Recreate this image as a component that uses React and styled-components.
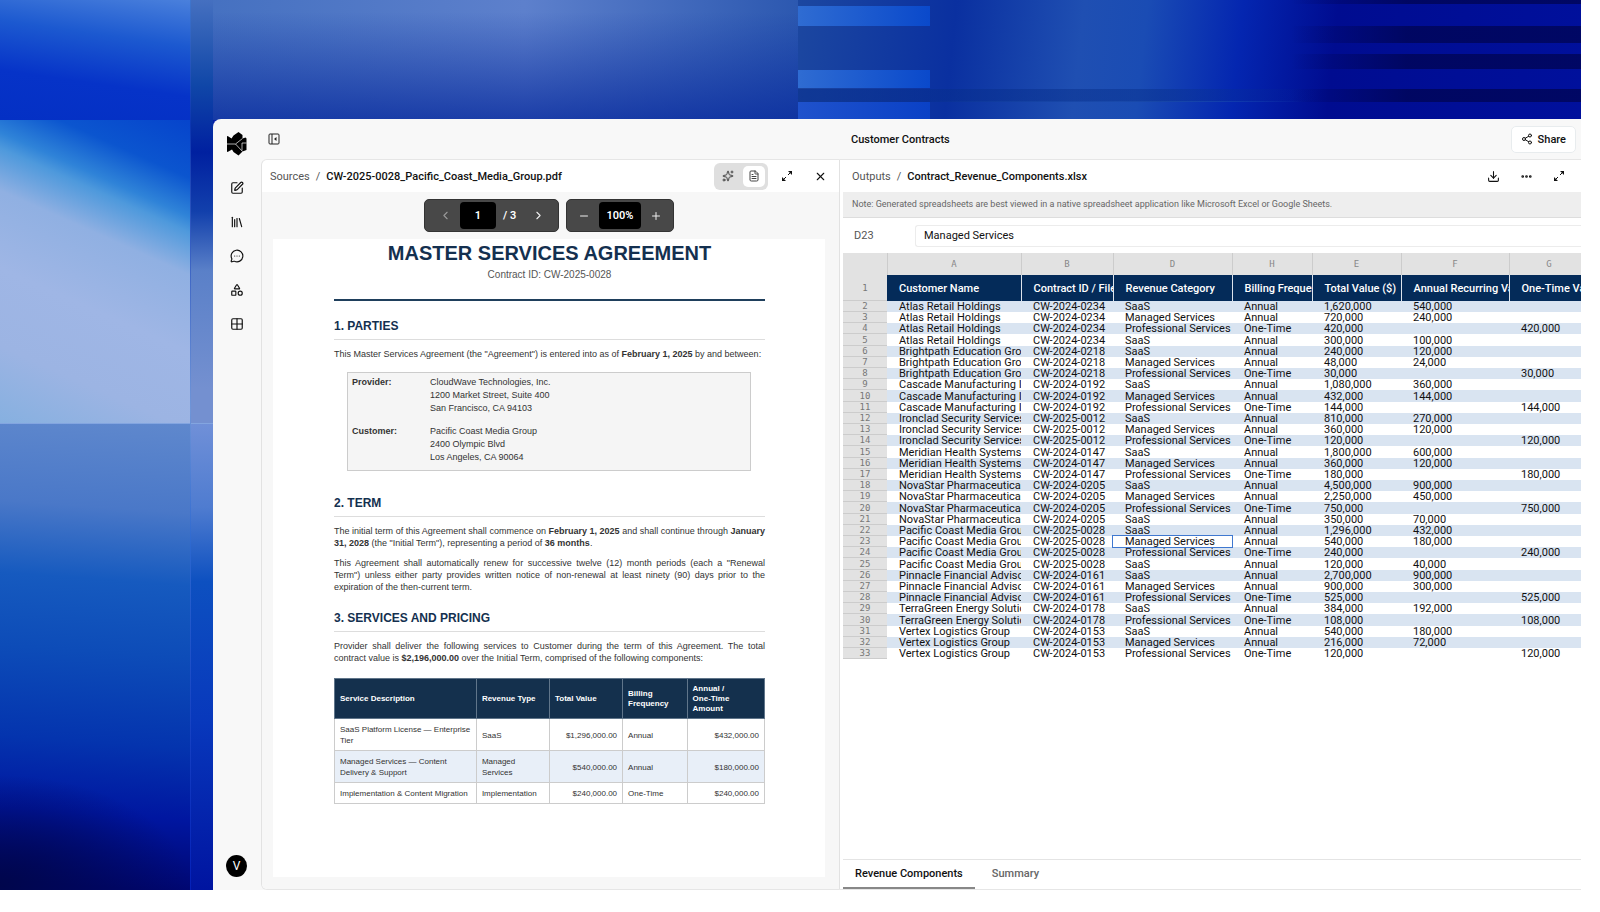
import styled, { createGlobalStyle, css } from "styled-components";
import {
  Download,
  Ellipsis,
  FileText,
  Grid2x2,
  Library,
  MessageCircleMore,
  Minus,
  Plus,
  ChevronLeft,
  ChevronRight,
  Shapes,
  Share2,
  Sparkles,
  SquarePen,
  X,
} from "lucide-react";

const NAMES = {
  atlas: ["Atlas Retail Holdings", "CW-2024-0234"],
  bright: ["Brightpath Education Group", "CW-2024-0218"],
  cascade: ["Cascade Manufacturing Inc", "CW-2024-0192"],
  iron: ["Ironclad Security Services", "CW-2025-0012"],
  meridian: ["Meridian Health Systems", "CW-2024-0147"],
  nova: ["NovaStar Pharmaceuticals", "CW-2024-0205"],
  pacific: ["Pacific Coast Media Group", "CW-2025-0028"],
  pinnacle: ["Pinnacle Financial Advisors", "CW-2024-0161"],
  terra: ["TerraGreen Energy Solutions", "CW-2024-0178"],
  vertex: ["Vertex Logistics Group", "CW-2024-0153"],
};

const SAAS = "SaaS";
const MANAGED = "Managed Services";
const PRO = "Professional Services";

// customer, category, total value, yearly value (none = one-time)
const DEALS = [
  ["atlas", SAAS, "1,620,000", "540,000"],
  ["atlas", MANAGED, "720,000", "240,000"],
  ["atlas", PRO, "420,000"],
  ["atlas", SAAS, "300,000", "100,000"],
  ["bright", SAAS, "240,000", "120,000"],
  ["bright", MANAGED, "48,000", "24,000"],
  ["bright", PRO, "30,000"],
  ["cascade", SAAS, "1,080,000", "360,000"],
  ["cascade", MANAGED, "432,000", "144,000"],
  ["cascade", PRO, "144,000"],
  ["iron", SAAS, "810,000", "270,000"],
  ["iron", MANAGED, "360,000", "120,000"],
  ["iron", PRO, "120,000"],
  ["meridian", SAAS, "1,800,000", "600,000"],
  ["meridian", MANAGED, "360,000", "120,000"],
  ["meridian", PRO, "180,000"],
  ["nova", SAAS, "4,500,000", "900,000"],
  ["nova", MANAGED, "2,250,000", "450,000"],
  ["nova", PRO, "750,000"],
  ["nova", SAAS, "350,000", "70,000"],
  ["pacific", SAAS, "1,296,000", "432,000"],
  ["pacific", MANAGED, "540,000", "180,000"],
  ["pacific", PRO, "240,000"],
  ["pacific", SAAS, "120,000", "40,000"],
  ["pinnacle", SAAS, "2,700,000", "900,000"],
  ["pinnacle", MANAGED, "900,000", "300,000"],
  ["pinnacle", PRO, "525,000"],
  ["terra", SAAS, "384,000", "192,000"],
  ["terra", PRO, "108,000"],
  ["vertex", SAAS, "540,000", "180,000"],
  ["vertex", MANAGED, "216,000", "72,000"],
  ["vertex", PRO, "120,000"],
];

const COLUMNS = [
  ["A", "Customer Name", 134],
  ["B", "Contract ID / File", 92],
  ["D", "Revenue Category", 119],
  ["H", "Billing Frequency", 80],
  ["E", "Total Value ($)", 89],
  ["F", "Annual Recurring Value ($)", 108],
  ["G", "One-Time Value ($)", 80],
];

const SERVICES = [
  ["SaaS Platform License — Enterprise Tier", "SaaS", "$1,296,000.00", "Annual", "$432,000.00"],
  ["Managed Services — Content Delivery & Support", "Managed Services", "$540,000.00", "Annual", "$180,000.00"],
  ["Implementation & Content Migration", "Implementation", "$240,000.00", "One-Time", "$240,000.00"],
];

const Logo = () => (
  <svg width="20" height="24" viewBox="0 0 20 24" aria-hidden="true">
    <path
      d="M0 4 1.500 4.500 4.500 6.500 6.500 3.500 11.500 0l4 3v3.500L18.500 5.500l1 1V18l-4 1.500-4 4L6.500 20 5 17.500 1.500 19.500 0 20Z"
      fill="#000"
    />
    <path
      d="M0 12h8.500L15.500 6.500M8.500 12l7 7.500M15 11v7.500M15 11h4.500"
      stroke="#f8f8f8"
      strokeWidth="0.7"
      fill="none"
    />
  </svg>
);

const PanelIcon = () => (
  <svg width="12" height="12" viewBox="0 0 12 12" fill="none" stroke="#222" aria-hidden="true">
    <rect x="1" y="1" width="10" height="10" rx="1" />
    <path d="M4 1v10" />
    <path d="M8.500 4v4L6 6Z" fill="#222" stroke="none" />
  </svg>
);

const ExpandIcon = () => (
  <svg width="12" height="12" viewBox="0 0 12 12" fill="none" stroke="#111" aria-hidden="true">
    <path d="M7 5l3-3M5 7l-3 3" />
    <path d="M7 1h4v4ZM1 7v4h4Z" fill="#111" stroke="none" />
  </svg>
);

const App = () => (
  <>
    <GlobalStyle />
    <Desktop>
      <Window>
        <SideBar>
          <Logo />
          <Nav>
            <IconButton aria-label="New"><SquarePen size={14} strokeWidth={2} /></IconButton>
            <IconButton aria-label="Library"><Library size={14} strokeWidth={2} /></IconButton>
            <IconButton aria-label="Chats"><MessageCircleMore size={14} strokeWidth={2} /></IconButton>
            <IconButton aria-label="Components"><Shapes size={14} strokeWidth={2} /></IconButton>
            <IconButton aria-label="Tables"><Grid2x2 size={14} strokeWidth={2} /></IconButton>
          </Nav>
          <Avatar>V</Avatar>
        </SideBar>
        <Workspace>
          <TopBar>
            <TopLeft>
              <IconButton aria-label="Collapse panel"><PanelIcon /></IconButton>
            </TopLeft>
            <TopRight>
              <PageTitle>Customer Contracts</PageTitle>
              <ShareButton><Share2 size={12} />Share</ShareButton>
            </TopRight>
          </TopBar>
          <Panes>
            <SourcePane />
            <OutputPane />
          </Panes>
        </Workspace>
      </Window>
    </Desktop>
  </>
);

const SourcePane = () => (
  <Pane $framed>
    <PaneHeader>
      <Crumb>Sources</Crumb>
      <Crumb>/</Crumb>
      <FileName>CW-2025-0028_Pacific_Coast_Media_Group.pdf</FileName>
      <HeaderActions>
        <ViewSwitch>
          <ViewButton aria-label="Summary view"><Sparkles size={12} /></ViewButton>
          <ViewButton $active aria-label="Document view"><FileText size={12} /></ViewButton>
        </ViewSwitch>
        <IconButton aria-label="Expand"><ExpandIcon /></IconButton>
        <IconButton aria-label="Close"><X size={13} /></IconButton>
      </HeaderActions>
    </PaneHeader>
    <Viewer>
      <PdfControls>
        <PdfGroup $pad={5}>
          <PdfButton $dim aria-label="Previous page"><ChevronLeft size={13} /></PdfButton>
          <PdfInput $width={36} defaultValue="1" aria-label="Page" />
          <PdfText>/ 3</PdfText>
          <PdfButton aria-label="Next page"><ChevronRight size={13} /></PdfButton>
        </PdfGroup>
        <PdfGroup $pad={2}>
          <PdfButton aria-label="Zoom out"><Minus size={12} /></PdfButton>
          <PdfInput $width={42} defaultValue="100%" aria-label="Zoom" />
          <PdfButton aria-label="Zoom in"><Plus size={12} /></PdfButton>
        </PdfGroup>
      </PdfControls>
      <Paper>
        <DocTitle>MASTER SERVICES AGREEMENT</DocTitle>
        <DocId>Contract ID: CW-2025-0028</DocId>
        <DocHeading>1. PARTIES</DocHeading>
        <DocText>
          This Master Services Agreement (the "Agreement") is entered into as of <b>February 1, 2025</b> by and between:
        </DocText>
        <Parties>
          <dt>Provider:</dt>
          <dd>CloudWave Technologies, Inc.<br />1200 Market Street, Suite 400<br />San Francisco, CA 94103</dd>
          <dt>Customer:</dt>
          <dd>Pacific Coast Media Group<br />2400 Olympic Blvd<br />Los Angeles, CA 90064</dd>
        </Parties>
        <DocHeading>2. TERM</DocHeading>
        <DocText>
          The initial term of this Agreement shall commence on <b>February 1, 2025</b> and shall continue through{" "}
          <b>January 31, 2028</b> (the "Initial Term"), representing a period of <b>36 months</b>.
        </DocText>
        <DocText>
          This Agreement shall automatically renew for successive twelve (12) month periods (each a "Renewal Term")
          unless either party provides written notice of non-renewal at least ninety (90) days prior to the expiration
          of the then-current term.
        </DocText>
        <DocHeading>3. SERVICES AND PRICING</DocHeading>
        <DocText>
          Provider shall deliver the following services to Customer during the term of this Agreement. The total
          contract value is <b>$2,196,000.00</b> over the Initial Term, comprised of the following components:
        </DocText>
        <ServiceTable>
          <colgroup>
            <col style={{ width: "33%" }} />
            <col style={{ width: "17%" }} />
            <col style={{ width: "17%" }} />
            <col style={{ width: "15%" }} />
            <col style={{ width: "18%" }} />
          </colgroup>
          <thead>
            <tr>
              <th>Service Description</th>
              <th>Revenue Type</th>
              <th>Total Value</th>
              <th>Billing Frequency</th>
              <th>Annual /<br />One-Time<br />Amount</th>
            </tr>
          </thead>
          <tbody>
            {SERVICES.map((row) => (
              <tr key={row[0]}>
                {row.map((cell, i) => (
                  <td key={i}>{cell}</td>
                ))}
              </tr>
            ))}
          </tbody>
        </ServiceTable>
      </Paper>
    </Viewer>
  </Pane>
);

const OutputPane = () => (
  <Pane>
    <PaneHeader $wide>
      <Crumb>Outputs</Crumb>
      <Crumb>/</Crumb>
      <FileName>Contract_Revenue_Components.xlsx</FileName>
      <HeaderActions>
        <IconButton aria-label="Download"><Download size={13} /></IconButton>
        <IconButton aria-label="More"><Ellipsis size={13} strokeWidth={3} /></IconButton>
        <IconButton aria-label="Expand"><ExpandIcon /></IconButton>
      </HeaderActions>
    </PaneHeader>
    <Note>
      Note: Generated spreadsheets are best viewed in a native spreadsheet application like Microsoft Excel or Google
      Sheets.
    </Note>
    <FormulaBar>
      <label htmlFor="formula">D23</label>
      <input id="formula" defaultValue={MANAGED} />
    </FormulaBar>
    <SheetArea>
      <Sheet>
        <colgroup>
          <col style={{ width: 44 }} />
          {COLUMNS.map(([letter, , width]) => (
            <col key={letter} style={{ width }} />
          ))}
        </colgroup>
        <thead>
          <tr>
            <LetterCell />
            {COLUMNS.map(([letter]) => (
              <LetterCell key={letter}>{letter}</LetterCell>
            ))}
          </tr>
        </thead>
        <tbody>
          <TitleRow>
            <NumberCell>1</NumberCell>
            {COLUMNS.map(([letter, title]) => (
              <td key={letter}>{title}</td>
            ))}
          </TitleRow>
          {DEALS.map(([who, category, total, yearly], i) => (
            <DataRow key={i}>
              <NumberCell>{i + 2}</NumberCell>
              <td>{NAMES[who][0]}</td>
              <td>{NAMES[who][1]}</td>
              <DataCell $selected={i + 2 === 23}>{category}</DataCell>
              <td>{yearly ? "Annual" : "One-Time"}</td>
              <td>{total}</td>
              <td>{yearly}</td>
              <td>{yearly ? "" : total}</td>
            </DataRow>
          ))}
        </tbody>
      </Sheet>
    </SheetArea>
    <Tabs>
      <Tab $active>Revenue Components</Tab>
      <Tab>Summary</Tab>
    </Tabs>
  </Pane>
);

export default App;

const GlobalStyle = createGlobalStyle`
  * {
    box-sizing: border-box;
  }
  body {
    margin: 0;
    background: #fff;
    color: #111;
    font-family: Roboto, Inter, sans-serif;
    font-size: 11px;
  }
  button, input {
    font: inherit;
    color: inherit;
    border: 0;
    padding: 0;
    background: none;
  }
  h1, h2, p, dl, dd {
    margin: 0;
  }
`;

const tile = (x, y, w, h, gradient) => `${gradient} ${x} ${y} / ${w} ${h} no-repeat`;

const stripe = "linear-gradient(90deg, #2f6cd2, #0a49cb)";

const darkBar = "linear-gradient(90deg, #00045000, #000450bb 40%, #000450bb)";

const wallpaper = [
  // seams between the big tiles
  tile("190px", "0", "1px", "100%", "linear-gradient(#3f76cc, #0b35b0 14%, #6f95d8 46%, #2a66cf 62%, #0420b8)"),
  tile("0", "423px", "213px", "1px", "linear-gradient(#83a5e0, #83a5e0)"),
  tile("0", "0", "190px", "120px", "linear-gradient(188deg, #4a80dc, #1c59d0 32%, #0633c8 66%, #0430c4)"),
  tile(
    "0",
    "120px",
    "190px",
    "303px",
    "linear-gradient(204deg, #0644cc, #0b55cf 15%, #2f83d8 25%, #4e99dc 29%, #90b0e2 40%, #9fb6e5 60%, #9cb4e3 80%, #86b0e0)"
  ),
  tile("0", "423px", "190px", "100%", "radial-gradient(190px 110px at 0 462px, #00064c, #00064c00)"),
  tile(
    "0",
    "423px",
    "190px",
    "100%",
    "linear-gradient(184deg, #5f88cd, #4a78c8 10%, #165abf 18%, #0d4cb8 26%, #0434ae 36%, #0016a0 44%, #000670 52%, #000450)"
  ),
  tile(
    "191px",
    "0",
    "22px",
    "423px",
    "linear-gradient(#4570c0, #1047a8 20%, #0020a0 36%, #1240ac 50%, #5a80c8 64%, #7490d0 92%)"
  ),
  tile("191px", "423px", "30px", "467px", "linear-gradient(#7090d8, #4f7cd0 18%, #0d50c0 34%, #0838bc 64%, #0014a0)"),
  // bright bars in the middle of the top strip
  tile("798px", "6px", "132px", "20px", stripe),
  tile("798px", "70px", "132px", "18px", stripe),
  tile("798px", "102px", "132px", "18px", "linear-gradient(90deg, #1f52cc, #0a41c6)"),
  // dark bars at the right
  tile("100%", "0", "290px", "4px", darkBar),
  tile("100%", "26px", "290px", "17px", darkBar),
  tile("100%", "54px", "290px", "15px", darkBar),
  tile("100%", "89px", "290px", "13px", darkBar),
  tile("798px", "89px", "520px", "13px", "linear-gradient(90deg, #062c8a80, #08308c80 70%, #00043800)"),
  tile("930px", "101px", "376px", "1px", "linear-gradient(90deg, #2a62c800, #2a62c8, #2a62c800)"),
  tile(
    "798px",
    "0",
    "calc(100% - 798px)",
    "120px",
    "linear-gradient(96deg, #1c47a0, #0a30a0 20%, #1f4fb2 36%, #1a4cb4 44%, #0426b0 56%, #000c90 68%, #00109c)"
  ),
  tile("191px", "0", "607px", "120px", "linear-gradient(#0a349c00 10%, #06289cc0)"),
  tile("191px", "0", "607px", "120px", "linear-gradient(90deg, #4470c0, #5d80cc 55%, #2c58b0)"),
].join(", ");

const Desktop = styled.div`
  display: flex;
  height: calc(100vh - 22px);
  margin-right: 19px;
  padding: 119px 0 0 213px;
  background: ${wallpaper}, #0420a8;
`;

const Window = styled.div`
  display: flex;
  flex: 1;
  min-width: 0;
  background: #f8f8f8;
  border-top-left-radius: 8px;
  overflow: hidden;
`;

const SideBar = styled.aside`
  display: flex;
  flex-direction: column;
  align-items: center;
  width: 48px;
  padding: 13px 1px 13px 0;
`;

const Nav = styled.nav`
  display: flex;
  flex-direction: column;
  gap: 14px;
  margin-top: 22px;
`;

const IconButton = styled.button`
  display: grid;
  place-items: center;
  width: 20px;
  height: 20px;
`;

const Avatar = styled.div`
  width: 21px;
  height: 22px;
  margin-top: auto;
  border-radius: 50%;
  background: #000;
  color: #fff;
  font-size: 12px;
  line-height: 22px;
  text-align: center;
`;

const Workspace = styled.div`
  display: flex;
  flex-direction: column;
  flex: 1;
  min-width: 0;
`;

const split = css`
  display: grid;
  grid-template-columns: minmax(0, 579fr) minmax(0, 741fr);
`;

const TopBar = styled.header`
  ${split}
  height: 40px;
`;

const TopLeft = styled.div`
  display: flex;
  align-items: center;
  padding-left: 3px;
`;

const TopRight = styled.div`
  display: flex;
  align-items: center;
  justify-content: space-between;
  padding: 0 5px 0 11px;
`;

const PageTitle = styled.h1`
  font-size: 11px;
  font-weight: 500;
`;

const ShareButton = styled.button`
  display: flex;
  align-items: center;
  gap: 5px;
  height: 27px;
  padding: 0 9px;
  border: 1px solid #e8ecee;
  border-radius: 5px;
  background: #fff;
  font-weight: 500;
`;

const Panes = styled.main`
  ${split}
  flex: 1;
  min-height: 0;
`;

const Pane = styled.section`
  display: flex;
  flex-direction: column;
  min-height: 0;
  border-top: 1px solid #e6e6e6;
  border-bottom: 1px solid #e6e6e6;
  background: #fff;
  padding-left: 3px;
  ${({ $framed }) =>
    $framed &&
    css`
      padding: 0;
      border-left: 1px solid #e2e2e2;
      border-right: 1px solid #e2e2e2;
      border-top-left-radius: 6px;
      border-bottom-left-radius: 6px;
      overflow: hidden;
    `}
`;

const PaneHeader = styled.div`
  display: flex;
  align-items: center;
  gap: 6px;
  flex: none;
  height: 32px;
  padding: 0 ${({ $wide }) => ($wide ? "12px 0 9px" : "9px 0 8px")};
`;

const Crumb = styled.span`
  color: #555;
`;

const FileName = styled.span`
  font-weight: 500;
`;

const HeaderActions = styled.div`
  display: flex;
  align-items: center;
  gap: 13px;
  margin-left: auto;
`;

const ViewSwitch = styled.div`
  display: flex;
  gap: 4px;
  padding: 3px;
  margin-right: -4px;
  border-radius: 6px;
  background: #dfdfdf;
`;

const ViewButton = styled.button`
  display: grid;
  place-items: center;
  width: 22px;
  height: 21px;
  border-radius: 5px;
  color: #444;
  background: ${({ $active }) => ($active ? "#fff" : "transparent")};
`;

const Viewer = styled.div`
  display: flex;
  flex-direction: column;
  flex: 1;
  min-height: 0;
  padding: 7px 14px 12px 11px;
  background: #f7f7f7;
`;

const PdfControls = styled.div`
  display: flex;
  justify-content: center;
  gap: 7px;
  margin-bottom: 7px;
`;

const PdfGroup = styled.div`
  display: flex;
  align-items: center;
  height: 33px;
  padding: 0 ${({ $pad }) => $pad}px;
  border: 1px solid #333;
  border-radius: 5px;
  background: #484848;
  color: #fff;
  font-size: 11px;
  font-weight: 600;
`;

const PdfButton = styled.button`
  display: grid;
  place-items: center;
  width: 30px;
  height: 26px;
  color: ${({ $dim }) => ($dim ? "#999" : "#eee")};
`;

const PdfInput = styled.input`
  width: ${({ $width }) => $width}px;
  height: 27px;
  border-radius: 4px;
  background: #000;
  text-align: center;
`;

const PdfText = styled.span`
  padding-left: 7px;
  width: 27px;
`;

const Paper = styled.article`
  flex: 1;
  min-height: 0;
  overflow: hidden;
  padding: 0 60px 0 61px;
  background: #fff;
  color: #333;
  font-family: "Liberation Sans", Arial, sans-serif;
  font-size: 9px;
  line-height: 12px;
`;

const DocTitle = styled.h1`
  margin-top: 1px;
  color: #14304f;
  font-size: 20px;
  line-height: 26px;
  text-align: center;
  white-space: nowrap;
`;

const DocId = styled.p`
  padding: 3px 0 18px;
  border-bottom: 2px solid #1f3f5c;
  color: #555;
  font-size: 10px;
  line-height: 12px;
  text-align: center;
`;

const DocHeading = styled.h2`
  margin: 18px 0 8px;
  padding-bottom: 6px;
  border-bottom: 1px solid #ddd;
  color: #14304f;
  font-size: 12px;
  line-height: 14px;
`;

const DocText = styled.p`
  margin-bottom: 8px;
  text-align: justify;
`;

const Parties = styled.dl`
  display: grid;
  grid-template-columns: 78px 1fr;
  row-gap: 10px;
  margin: 12px 14px 25px 13px;
  padding: 3px 4px 6px;
  border: 1px solid #ccc;
  background: #f5f5f5;
  line-height: 13px;

  dt {
    font-weight: 700;
  }
`;

const ServiceTable = styled.table`
  width: 100%;
  margin-top: 14px;
  border-collapse: collapse;
  table-layout: fixed;
  border: 1px solid #1a3049;
  border-bottom-color: #bbb;
  font-size: 8px;
  line-height: 11px;

  th,
  td {
    padding: 5px 5px 4px;
    border: 1px solid #ccc;
    text-align: left;
  }
  th {
    background: #14304d;
    color: #fff;
    border-color: #60758a;
    line-height: 10px;
  }
  td:nth-child(3),
  td:nth-child(5) {
    text-align: right;
  }
  tbody tr:nth-child(even) {
    background: #e8eff8;
  }
`;

const Note = styled.p`
  flex: none;
  padding: 0 9px;
  border-bottom: 1px solid #ddd;
  background: #eee;
  color: #666;
  font-size: 9px;
  line-height: 25px;
`;

const FormulaBar = styled.div`
  display: flex;
  align-items: center;
  flex: none;
  height: 35px;

  label {
    width: 72px;
    padding-left: 11px;
    color: #555;
  }
  input {
    flex: 1;
    min-width: 0;
    height: 22px;
    padding: 0 8px;
    border: 1px solid #ececec;
    border-right: 0;
    border-radius: 3px 0 0 3px;
  }
`;

const SheetArea = styled.div`
  flex: 1;
  min-height: 0;
  overflow: hidden;
`;

const Sheet = styled.table`
  width: 746px;
  min-width: 100%;
  border-collapse: collapse;
  table-layout: fixed;
  line-height: 11px;

  td,
  th {
    padding: 0;
    overflow: hidden;
    white-space: nowrap;
    text-overflow: clip;
  }
  td {
    padding-left: 12px;
  }
`;

const LetterCell = styled.th`
  height: 22px;
  background: #e2e2e2;
  border-right: 1px solid #ccc;
  color: #888;
  font-family: "DejaVu Sans Mono", monospace;
  font-size: 9px;
  font-weight: 400;
`;

const NumberCell = styled.th`
  background: #e2e2e2;
  box-shadow: inset 0 -1px #ccc;
  color: #777;
  font-family: "DejaVu Sans Mono", monospace;
  font-size: 9px;
  font-weight: 400;
`;

const TitleRow = styled.tr`
  height: 26px;
  background: #042b59;
  color: #fff;
  font-weight: 500;

  td {
    border-right: 1px solid #dde4ec;
  }
`;

// rows are a little over 11px high, so every fifth takes the spare pixel
const DataRow = styled.tr`
  height: 11px;

  &:nth-child(5n) {
    height: 12px;
  }
  &:nth-child(even) {
    background: #d9e4f1;
  }
`;

const DataCell = styled.td`
  ${({ $selected }) =>
    $selected &&
    css`
      outline: 1px solid #3f78d0;
    `}
`;

const Tabs = styled.div`
  display: flex;
  flex: none;
  height: 30px;
  border-top: 1px solid #e4e4e4;
`;

const Tab = styled.button`
  padding: 0 12px;
  margin-right: 5px;
  border-bottom: 2px solid ${({ $active }) => ($active ? "#888" : "transparent")};
  color: ${({ $active }) => ($active ? "#111" : "#666")};
  font-weight: 500;
`;
